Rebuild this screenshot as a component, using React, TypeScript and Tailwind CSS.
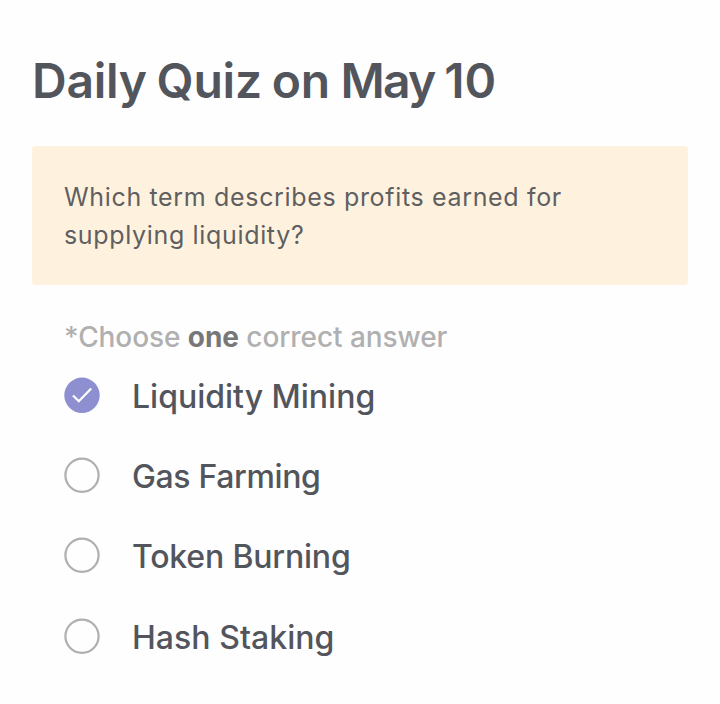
import React from "react";

const options = [
  { label: "Liquidity Mining", checked: true, style: "h-20 tracking-[0px]" },
  { label: "Gas Farming", checked: false, style: "h-20 tracking-[-0.36px]" },
  { label: "Token Burning", checked: false, style: "h-[81px] tracking-[-0.18px]" },
  { label: "Hash Staking", checked: false, style: "h-20 tracking-[0.04px]" },
];

export default function App() {
  return (
    <main className="h-[704px] w-[720px] overflow-hidden bg-[#fefefe] px-8 pt-[51px] font-['Inter',sans-serif] text-[#53555d]">
      <h1 className="h-[60px] whitespace-nowrap text-[48px] font-semibold leading-[60px] tracking-[-0.25px] [word-spacing:-2px]">
        Daily Quiz on <span className="ml-px tracking-[-1.8px]">May</span> 10
      </h1>
      <section className="mt-[35px] h-[139px] rounded-[3px] bg-[#fef2df] px-8 pt-8 text-[25px] font-normal leading-[38px] tracking-[0.66px] text-[#5f5f61]">
        <p className="whitespace-nowrap">
          Which term describes profits earned for
          <br />
          supplying liquidity?
        </p>
      </section>
      <section className="px-8 pt-8">
        <p className="h-10 whitespace-nowrap text-[28px] font-medium leading-10 tracking-[-0.07px] text-[#b0b0b0]">
          *Choose <b className="font-bold text-[#77777a]">one</b> correct answer
        </p>
        {options.map((o) => (
          <label key={o.label} className={"flex items-start " + o.style}>
            <svg
              role="radio"
              aria-checked={o.checked}
              viewBox="0 0 36 36"
              className="mt-5 size-9 shrink-0"
              fill="none"
            >
              {o.checked ? (
                <>
                  <circle cx="18" cy="18.3" r="17.7" fill="#8d8fd0" />
                  <path d="M9 18.5L14.8 24.3L27.2 11.6" stroke="white" strokeWidth="2.2" />
                </>
              ) : (
                <circle cx="18" cy="18.3" r="16.6" stroke="#afafaf" strokeWidth="2.2" />
              )}
            </svg>
            <span className="ml-8 mt-5 whitespace-nowrap text-[32px] font-medium leading-10">{o.label}</span>
          </label>
        ))}
      </section>
    </main>
  );
}
